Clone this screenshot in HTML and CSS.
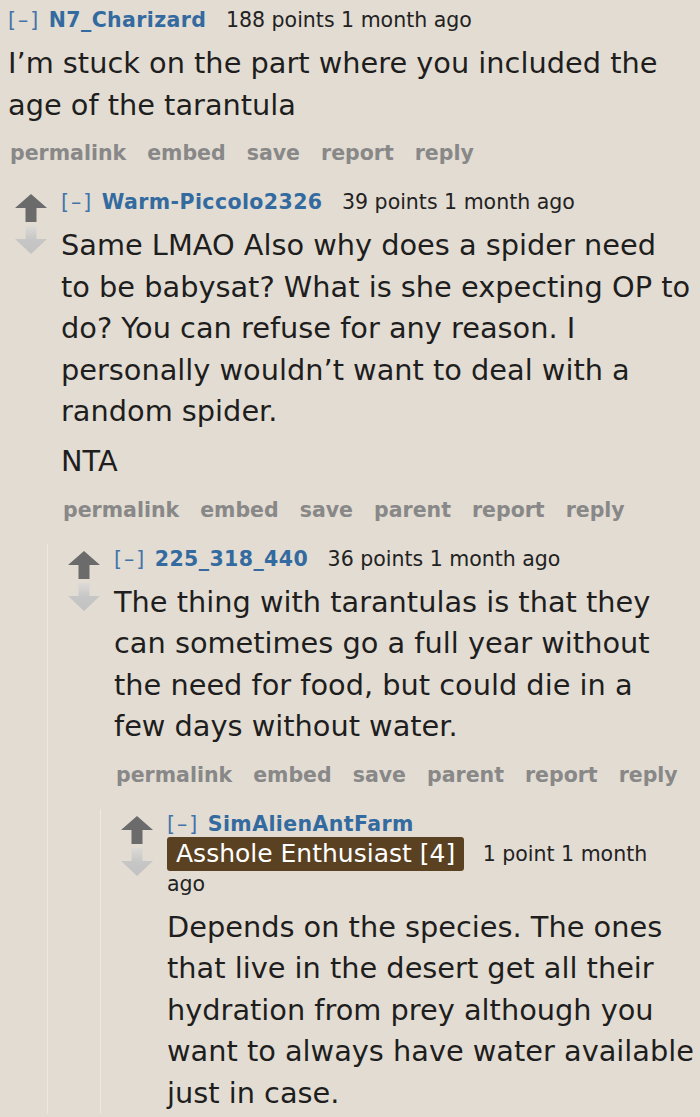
FILE: index.html
```html
<!DOCTYPE html>
<html lang="en">
<head>
<meta charset="utf-8">
<title>Comments</title>
<link rel="stylesheet" href="styles.css">
</head>
<body>
<div class="thread">
  <div class="comment">
    <div class="entry">
      <p class="tagline"><a class="expand">[–]</a> <a class="author">N7_Charizard</a> <span class="meta">188 points 1 month ago</span></p>
      <div class="md"><p>I’m stuck on the part where you included the<br>age of the tarantula</p></div>
      <ul class="buttons"><li>permalink</li><li>embed</li><li>save</li><li>report</li><li>reply</li></ul>

      <div class="child">
        <div class="comment">
          <div class="midcol">
            <svg class="arrow" viewBox="0 0 32 28" width="32" height="28"><path class="up" d="M16 0 L32 14 L21.5 14 L21.5 28 L10.5 28 L10.5 14 L0 14 Z"/></svg>
            <svg class="arrow" viewBox="0 0 32 28" width="32" height="28"><defs><linearGradient id="dg1" x1="0" y1="0" x2="0" y2="1"><stop offset="0" stop-color="#dcdad6"/><stop offset="0.5" stop-color="#c6c6c6"/><stop offset="1" stop-color="#c2c2c2"/></linearGradient></defs><path fill="url(#dg1)" d="M10.5 0 L21.5 0 L21.5 13 L32 13 L16 28 L0 13 L10.5 13 Z"/></svg>
          </div>
          <div class="entry">
            <p class="tagline"><a class="expand">[–]</a> <a class="author">Warm-Piccolo2326</a> <span class="meta">39 points 1 month ago</span></p>
            <div class="md"><p>Same LMAO Also why does a spider need<br>to be babysat? What is she expecting OP to<br>do? You can refuse for any reason. I<br>personally wouldn’t want to deal with a<br>random spider.</p><p>NTA</p></div>
            <ul class="buttons"><li>permalink</li><li>embed</li><li>save</li><li>parent</li><li>report</li><li>reply</li></ul>

            <div class="child">
              <div class="comment">
                <div class="midcol">
                  <svg class="arrow" viewBox="0 0 32 28" width="32" height="28"><path class="up" d="M16 0 L32 14 L21.5 14 L21.5 28 L10.5 28 L10.5 14 L0 14 Z"/></svg>
                  <svg class="arrow" viewBox="0 0 32 28" width="32" height="28"><defs><linearGradient id="dg2" x1="0" y1="0" x2="0" y2="1"><stop offset="0" stop-color="#dcdad6"/><stop offset="0.5" stop-color="#c6c6c6"/><stop offset="1" stop-color="#c2c2c2"/></linearGradient></defs><path fill="url(#dg2)" d="M10.5 0 L21.5 0 L21.5 13 L32 13 L16 28 L0 13 L10.5 13 Z"/></svg>
                </div>
                <div class="entry">
                  <p class="tagline"><a class="expand">[–]</a> <a class="author">225_318_440</a> <span class="meta">36 points 1 month ago</span></p>
                  <div class="md"><p>The thing with tarantulas is that they<br>can sometimes go a full year without<br>the need for food, but could die in a<br>few days without water.</p></div>
                  <ul class="buttons"><li>permalink</li><li>embed</li><li>save</li><li>parent</li><li>report</li><li>reply</li></ul>

                  <div class="child">
                    <div class="comment">
                      <div class="midcol">
                        <svg class="arrow" viewBox="0 0 32 28" width="32" height="28"><path class="up" d="M16 0 L32 14 L21.5 14 L21.5 28 L10.5 28 L10.5 14 L0 14 Z"/></svg>
                        <svg class="arrow" viewBox="0 0 32 28" width="32" height="28"><defs><linearGradient id="dg3" x1="0" y1="0" x2="0" y2="1"><stop offset="0" stop-color="#dcdad6"/><stop offset="0.5" stop-color="#c6c6c6"/><stop offset="1" stop-color="#c2c2c2"/></linearGradient></defs><path fill="url(#dg3)" d="M10.5 0 L21.5 0 L21.5 13 L32 13 L16 28 L0 13 L10.5 13 Z"/></svg>
                      </div>
                      <div class="entry">
                        <p class="tagline"><a class="expand">[–]</a> <a class="author">SimAlienAntFarm</a><br><span class="flair">Asshole Enthusiast [4]</span> <span class="meta">1 point 1 month<br>ago</span></p>
                        <div class="md"><p>Depends on the species. The ones<br>that live in the desert get all their<br>hydration from prey although you<br>want to always have water available<br>just in case.</p></div>
                      </div>
                    </div>
                  </div>
                </div>
              </div>
            </div>
          </div>
        </div>
      </div>
    </div>
  </div>
</div>
</body>
</html>
```

FILE: styles.css
```css
html, body {
  margin: 0;
  padding: 0;
  background: #e3dcd2;
}
body {
  overflow: hidden;
  font-family: "DejaVu Sans", Verdana, sans-serif;
  color: #222;
}
.thread {
  padding: 5px 0 0 8px;
}
.comment {
  display: flex;
  align-items: flex-start;
  gap: 14px;
}
.entry {
  flex: 1;
  min-width: 0;
}
.midcol {
  width: 32px;
  flex: none;
  display: flex;
  flex-direction: column;
  gap: 4px;
  padding-top: 7px;
}
.arrow {
  display: block;
}
.up {
  fill: #6b6b6b;
}
.tagline {
  margin: 0 0 8px;
  font-size: 20.5px;
  line-height: 30px;
  color: #222;
  white-space: nowrap;
}
.expand {
  color: #4274ab;
  letter-spacing: 2px;
  margin-right: 2px;
}
.author {
  color: #336a9f;
  font-weight: bold;
  letter-spacing: 0.4px;
  margin-right: 13px;
}
.flair {
  display: inline-block;
  vertical-align: top;
  margin: -2px 12px -2px 0;
  height: 34px;
  line-height: 34px;
  padding: 0 9px;
  border-radius: 3px;
  background: #5a4122;
  color: #fff;
  font-size: 25px;
}
.md {
  font-size: 28.8px;
  line-height: 41.5px;
  color: #1e1e1e;
  white-space: nowrap;
}
.md p {
  margin: 0;
}
.md p + p {
  margin-top: 8.5px;
}
.buttons {
  list-style: none;
  margin: 12px 0 0;
  padding: 0 0 0 2px;
  display: flex;
  gap: 21px;
  font-size: 20.5px;
  line-height: 30px;
  font-weight: bold;
  color: #888;
}
.child {
  margin: 19px 0 0 -14px;
  padding-left: 20px;
  border-left: 1px solid #ece8e2;
}
```
